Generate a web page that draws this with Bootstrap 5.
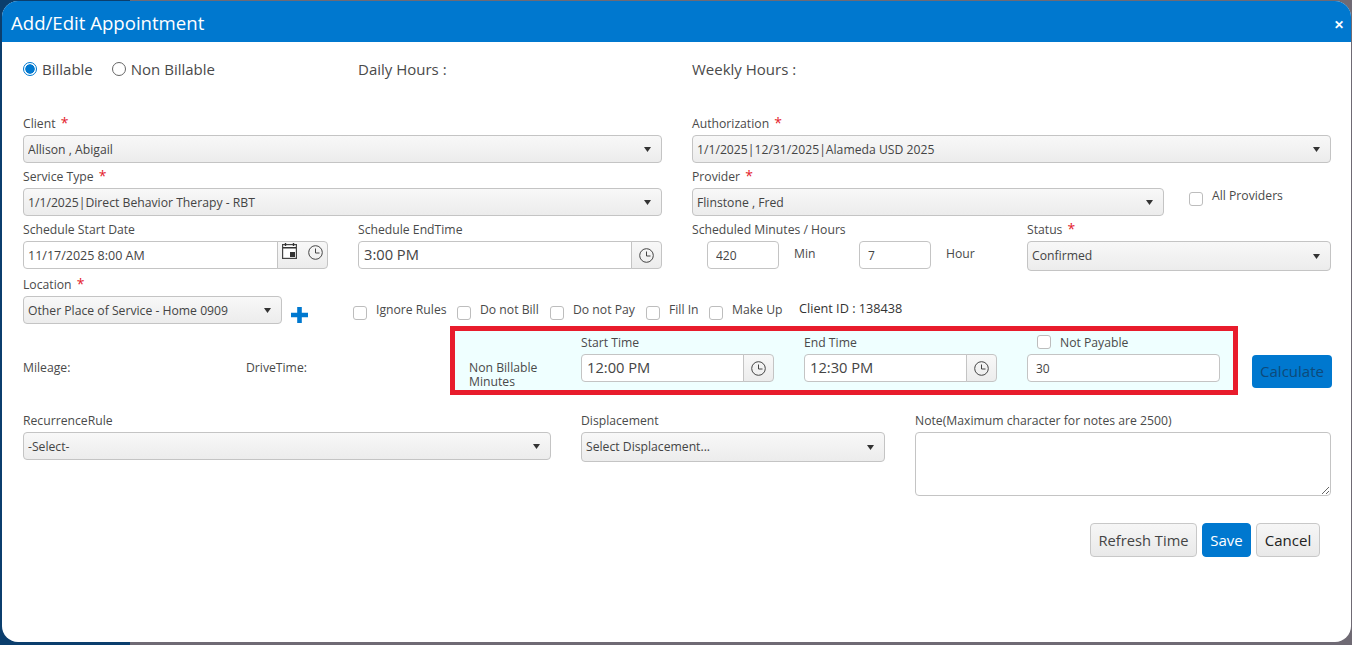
<!DOCTYPE html>
<html lang="en">
<head>
<meta charset="utf-8">
<title>Add/Edit Appointment</title>
<link href="https://cdn.jsdelivr.net/npm/bootstrap@5.3.0/dist/css/bootstrap.min.css" rel="stylesheet">
<style>
html,body{height:645px;overflow:hidden}
body{font-family:"Open Sans","Noto Sans",sans-serif;font-size:12.2px;color:#4a4a4a;
 background:linear-gradient(90deg,#0b3e6d 0 130px,#6f6a74 130px 100%);padding:1px 1px 3px 2px}
.appt-modal{height:641px;border:0;border-radius:16px;overflow:hidden;background:#fff}
.appt-head{height:41px;background:#0078cf;color:#fff;padding:0 9px;border:0;border-radius:0;flex-shrink:0}
.appt-title{font-size:18.6px;font-weight:400;line-height:24px;margin:2px 0 0}
.appt-close{font-size:12px;font-weight:700;line-height:1;color:#fff;background:none;border:0;padding:0;margin-top:6px;margin-right:-2px}
.appt-body{padding:17px 20px 0 21px}
.radio-row{height:20px;font-size:15px;line-height:20px;margin-bottom:36px}
.radio-col{width:335px}
.radio-item{display:flex;align-items:center;gap:5px}
.radio-item + .radio-item{margin-left:19px}
.hours-a{width:334px}
.flow{display:flex}
.mt5{margin-top:5px}
.lbl{display:block;font-size:12.2px;line-height:18px;height:16px;margin:0 0 4px;white-space:nowrap}
.req{color:#e4212b;font-size:14px;margin-left:2px;line-height:0}
.w639{width:639px}.w472{width:472px}.w305{width:305px}.w304{width:304px}.w259{width:259px}.w528{width:528px}.w416{width:416px}
.ml30{margin-left:30px}
.form-select.dd{height:28px;padding:2px 24px 0 4px;font-size:12.2px;line-height:24px;color:#444;border:1px solid #c4c4c4;border-radius:4px;
 background-color:#f3f3f3;
 background-image:url("data:image/svg+xml,%3Csvg xmlns='http://www.w3.org/2000/svg' width='7' height='5'%3E%3Cpath d='M0 0h7L3.5 5z' fill='%23333'/%3E%3C/svg%3E"),linear-gradient(#f8f8f8,#ececec);
 background-position:right 10px center,0 0;background-size:7px 5px,auto;background-repeat:no-repeat}
.form-select.dd.tall{height:30px;padding-top:0}
.form-control.tb{height:28px;padding:0 4px;font-size:12.5px;color:#444;border:1px solid #c4c4c4;border-radius:4px;box-shadow:none}
.form-control.big{font-size:14.7px;padding:0 5px 2px}
.form-control.num{padding:0 8px;font-size:12px}
.addon{padding:0;width:31px;justify-content:center;background:linear-gradient(#f8f8f8,#ececec);border:1px solid #c4c4c4;border-radius:0 4px 4px 0}
.addon.dbl{width:51px;gap:11px;align-items:flex-start;justify-content:flex-start;padding:1px 0 0 4px}
.addon.dbl svg:last-child{margin-top:2px}
.mins{width:305px;display:grid;grid-template-columns:72px 80px 72px auto;padding-left:15px;align-items:center}
.unit{padding-left:15px;margin-top:-1px}
.plus-btn{margin:31px 0 0 9px;line-height:0}
.all-prov{margin:22px 0 0 25px}
.all-prov .box{margin-top:3px}
.chk-grid{display:grid;grid-template-columns:104px 93px 96px 63px 90px auto;margin:28px 0 0 45px;height:16px}
.chk{display:flex;gap:9px;line-height:12px;white-space:nowrap}
.form-check-input.box{width:14px;height:14px;margin:2px 0 0;border:1px solid #bdbdbd;border-radius:3px;flex-shrink:0;background-color:#fff;box-shadow:none}
.form-check-input.rad{width:14px;height:14px;margin:0;border:1px solid #666;flex-shrink:0;box-shadow:none}
.form-check-input.rad:checked{background-color:#fff;border-color:#0078cf;background-image:radial-gradient(circle,#0078cf 0 4.4px,#fff 5px)}
.client-id{color:#333;font-size:12.7px;margin-top:-5px}
.mid-row{margin-top:2px;height:69px}
.plain-a{width:223px;flex-shrink:0;line-height:16px;margin-top:34px}
.plain-b{width:204px;flex-shrink:0;line-height:16px;margin-top:34px}
.red-box{width:788px;flex-shrink:0;height:69px;border:5px solid #e81c2c;background:#efffff;padding:3px 0 0 14px;display:flex}
.nb-lbl{width:112px;padding-top:27px;line-height:14px}
.w193{width:193px}
.tgap{margin-left:30px}
.np-chk{display:flex;gap:9px;align-items:flex-start;height:16px;margin:0 0 4px 10px;line-height:18px;font-size:12.2px}
.np-chk .box{margin-top:1px}
.calc{margin:29px 0 0 14px;width:80px;height:33px;padding:0;background:#0078cf;border:0;color:#0d4a7a;font-size:15px;border-radius:4px;flex-shrink:0}
.calc:hover{background:#0078cf;color:#0d4a7a}
.rec-row{margin-top:17px}
textarea.form-control.tb{height:64px;padding:4px;min-height:0}
.btn-row{margin-top:27px;padding-right:11px;gap:5px}
.act{height:34px;padding:0;font-size:15px;line-height:32px;border-radius:4px;border:1px solid #c8c8c8;background:linear-gradient(#f6f6f6,#e9e9e9);color:#444}
.act.wr{width:107px;font-size:14.7px}
.act.ws{width:49px}
.act.wc{width:64px;color:#222}
.act.pri{background:#0078cf;border-color:#0078cf;color:#fff}
</style>
</head>
<body>
<div class="modal-content appt-modal">
  <div class="modal-header appt-head d-flex justify-content-between align-items-center">
    <h5 class="modal-title appt-title">Add/Edit Appointment</h5>
    <button type="button" class="appt-close" aria-label="Close">&#10005;</button>
  </div>
  <div class="modal-body appt-body">
    <div class="flow radio-row align-items-center">
      <div class="d-flex radio-col">
        <label class="radio-item"><input class="form-check-input rad" type="radio" name="bill" checked>Billable</label>
        <label class="radio-item"><input class="form-check-input rad" type="radio" name="bill">Non Billable</label>
      </div>
      <span class="hours-a">Daily Hours :</span>
      <span>Weekly Hours :</span>
    </div>

    <div class="flow">
      <div class="w639"><label class="lbl">Client <span class="req">*</span></label>
        <select class="form-select dd"><option>Allison , Abigail</option></select></div>
      <div class="w639 ml30"><label class="lbl">Authorization <span class="req">*</span></label>
        <select class="form-select dd"><option>1/1/2025|12/31/2025|Alameda USD 2025</option></select></div>
    </div>

    <div class="flow mt5">
      <div class="w639"><label class="lbl">Service Type <span class="req">*</span></label>
        <select class="form-select dd"><option>1/1/2025|Direct Behavior Therapy - RBT</option></select></div>
      <div class="w472 ml30"><label class="lbl">Provider <span class="req">*</span></label>
        <select class="form-select dd"><option>Flinstone , Fred</option></select></div>
      <label class="chk all-prov"><input class="form-check-input box" type="checkbox">All Providers</label>
    </div>

    <div class="flow mt5">
      <div class="w305"><label class="lbl">Schedule Start Date</label>
        <div class="input-group flex-nowrap">
          <input class="form-control tb" value="11/17/2025 8:00 AM">
          <span class="input-group-text addon dbl">
            <svg width="15" height="16" viewBox="0 0 15 16"><rect x=".6" y="1.6" width="13.8" height="13.8" fill="#fff" stroke="#444" stroke-width="1.2"/><path d="M1 4h13v1.4H1z" fill="#333"/><path d="M3.5 0v3M11.5 0v3" stroke="#333" stroke-width="1.4"/><rect x="8" y="9" width="5" height="5" fill="#333"/></svg>
            <svg width="15" height="15" viewBox="0 0 15 15"><circle cx="7.5" cy="7.5" r="6.8" fill="none" stroke="#444"/><path d="M7.5 3.5v4.5h4" fill="none" stroke="#444"/></svg>
          </span>
        </div></div>
      <div class="w304 ml30"><label class="lbl">Schedule EndTime</label>
        <div class="input-group flex-nowrap">
          <input class="form-control tb big" value="3:00 PM">
          <span class="input-group-text addon"><svg width="15" height="15" viewBox="0 0 15 15"><circle cx="7.5" cy="7.5" r="6.8" fill="none" stroke="#444"/><path d="M7.5 3.5v4.5h4" fill="none" stroke="#444"/></svg></span>
        </div></div>
      <div class="ml30 w305"><label class="lbl">Scheduled Minutes / Hours</label>
        <div class="mins">
          <input class="form-control tb num" value="420"><span class="unit">Min</span>
          <input class="form-control tb num" value="7"><span class="unit">Hour</span>
        </div></div>
      <div class="w304 ml30"><label class="lbl">Status <span class="req">*</span></label>
        <select class="form-select dd tall"><option>Confirmed</option></select></div>
    </div>

    <div class="flow mt5">
      <div class="w259"><label class="lbl">Location <span class="req">*</span></label>
        <select class="form-select dd"><option>Other Place of Service - Home 0909</option></select></div>
      <div class="plus-btn"><svg width="17" height="16" viewBox="0 0 17 16"><path d="M6.2 0h4.6v5.8H17v4.4h-6.2V16H6.2v-5.8H0V5.8h6.2z" fill="#0078cf"/></svg></div>
      <div class="chk-grid">
        <label class="chk"><input class="form-check-input box" type="checkbox">Ignore Rules</label>
        <label class="chk"><input class="form-check-input box" type="checkbox">Do not Bill</label>
        <label class="chk"><input class="form-check-input box" type="checkbox">Do not Pay</label>
        <label class="chk"><input class="form-check-input box" type="checkbox">Fill In</label>
        <label class="chk"><input class="form-check-input box" type="checkbox">Make Up</label>
        <span class="client-id">Client ID : 138438</span>
      </div>
    </div>

    <div class="flow mid-row">
      <div class="plain-a">Mileage:</div>
      <div class="plain-b">DriveTime:</div>
      <div class="red-box">
        <div class="nb-lbl">Non Billable Minutes</div>
        <div class="w193"><label class="lbl">Start Time</label>
          <div class="input-group flex-nowrap">
            <input class="form-control tb big" value="12:00 PM">
            <span class="input-group-text addon"><svg width="15" height="15" viewBox="0 0 15 15"><circle cx="7.5" cy="7.5" r="6.8" fill="none" stroke="#444"/><path d="M7.5 3.5v4.5h4" fill="none" stroke="#444"/></svg></span>
          </div></div>
        <div class="w193 tgap"><label class="lbl">End Time</label>
          <div class="input-group flex-nowrap">
            <input class="form-control tb big" value="12:30 PM">
            <span class="input-group-text addon"><svg width="15" height="15" viewBox="0 0 15 15"><circle cx="7.5" cy="7.5" r="6.8" fill="none" stroke="#444"/><path d="M7.5 3.5v4.5h4" fill="none" stroke="#444"/></svg></span>
          </div></div>
        <div class="w193 tgap">
          <label class="np-chk"><input class="form-check-input box" type="checkbox">Not Payable</label>
          <input class="form-control tb num" value="30">
        </div>
      </div>
      <button type="button" class="btn calc">Calculate</button>
    </div>

    <div class="flow rec-row">
      <div class="w528"><label class="lbl">RecurrenceRule</label>
        <select class="form-select dd"><option>-Select-</option></select></div>
      <div class="w304 ml30"><label class="lbl">Displacement</label>
        <select class="form-select dd tall"><option>Select Displacement...</option></select></div>
      <div class="w416 ml30"><label class="lbl">Note(Maximum character for notes are 2500)</label>
        <textarea class="form-control tb"></textarea></div>
    </div>

    <div class="d-flex justify-content-end btn-row">
      <button type="button" class="btn act wr">Refresh Time</button>
      <button type="button" class="btn act ws pri">Save</button>
      <button type="button" class="btn act wc">Cancel</button>
    </div>
  </div>
</div>
<script src="https://cdn.jsdelivr.net/npm/bootstrap@5.3.0/dist/js/bootstrap.bundle.min.js"></script>
</body>
</html>
